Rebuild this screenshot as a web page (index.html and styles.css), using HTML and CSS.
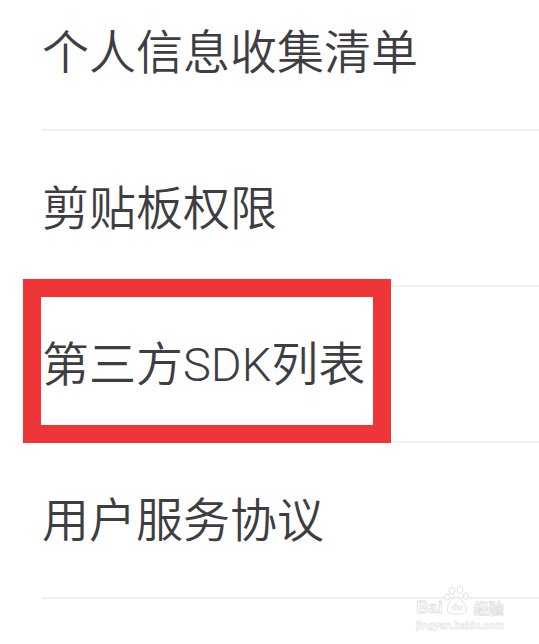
FILE: index.html
```html
<!DOCTYPE html>
<html lang="zh-CN">
<head>
    <meta charset="UTF-8">
    <meta name="viewport" content="width=device-width, initial-scale=1.0">
    <title>设置</title>
    <link rel="stylesheet" href="styles.css">
</head>
<body>
    <ul class="menu-list">
        <li class="menu-item">个人信息收集清单</li>
        <li class="menu-item">剪贴板权限</li>
        <li class="menu-item marked">
            第三方SDK列表
            <span class="highlight-box"></span>
        </li>
        <li class="menu-item">用户服务协议</li>
    </ul>

    <div class="watermark">
        <div class="wm-logo">
            <span class="wm-bai">Bai</span>
            <span class="wm-paw">
                <svg width="30" height="30" viewBox="0 0 30 30">
                    <g fill="#fff" stroke="#e2e2e6" stroke-width="1">
                        <ellipse cx="9" cy="5" rx="3" ry="3.6"/>
                        <ellipse cx="17" cy="4" rx="3" ry="3.6"/>
                        <ellipse cx="4" cy="11" rx="2.6" ry="3.2"/>
                        <ellipse cx="23" cy="10" rx="2.6" ry="3.2"/>
                        <path d="M13 11 C7 13 3 21 5 26 C7 29 20 29 23 26 C25 21 19 13 13 11 Z"/>
                    </g>
                    <text x="14" y="24" text-anchor="middle" class="wm-du">du</text>
                </svg>
            </span>
            <span class="wm-cn">经验</span>
        </div>
        <div class="wm-url">jingyan.baidu.com</div>
    </div>
</body>
</html>
```

FILE: styles.css
```css
body {
    margin: 0;
    background-color: #ffffff;
    font-family: Roboto, "Noto Sans CJK SC", sans-serif;
    overflow: hidden;
    height: 644px;
    position: relative;
}

.menu-list {
    list-style: none;
    margin: -25px 0 0 42px;
    padding: 0;
}

.menu-item {
    display: flex;
    align-items: center;
    height: 154px;
    border-bottom: 2px solid #eff0f4;
    color: #3e3e42;
    font-size: 47px;
    font-weight: 350;
    line-height: 1;
    position: relative;
}

/* red annotation frame drawn over the third row */
.highlight-box {
    position: absolute;
    top: -8px;
    left: -19px;
    width: 368px;
    height: 164px;
    border: 18px solid #ee3638;
    box-sizing: border-box;
}

.watermark {
    position: absolute;
    left: 410px;
    top: 586px;
    width: 100px;
    text-align: center;
    font-family: "Liberation Sans", Arial, sans-serif;
}

.wm-logo {
    display: flex;
    align-items: flex-end;
    justify-content: center;
    height: 30px;
}

.wm-bai,
.wm-cn {
    font-size: 17px;
    font-weight: bold;
    color: #ffffff;
    -webkit-text-stroke: 0.8px #dedee3;
    line-height: 17px;
}

.wm-cn {
    font-family: "Noto Sans CJK SC", sans-serif;
    font-size: 15px;
    margin-left: 1px;
}

.wm-paw svg {
    display: block;
}

.wm-du {
    font-size: 9px;
    font-weight: bold;
    fill: #e4e4e8;
}

.wm-url {
    font-size: 10px;
    font-weight: bold;
    color: #ffffff;
    -webkit-text-stroke: 0.5px #e0e0e5;
    margin-top: 4px;
}
```
